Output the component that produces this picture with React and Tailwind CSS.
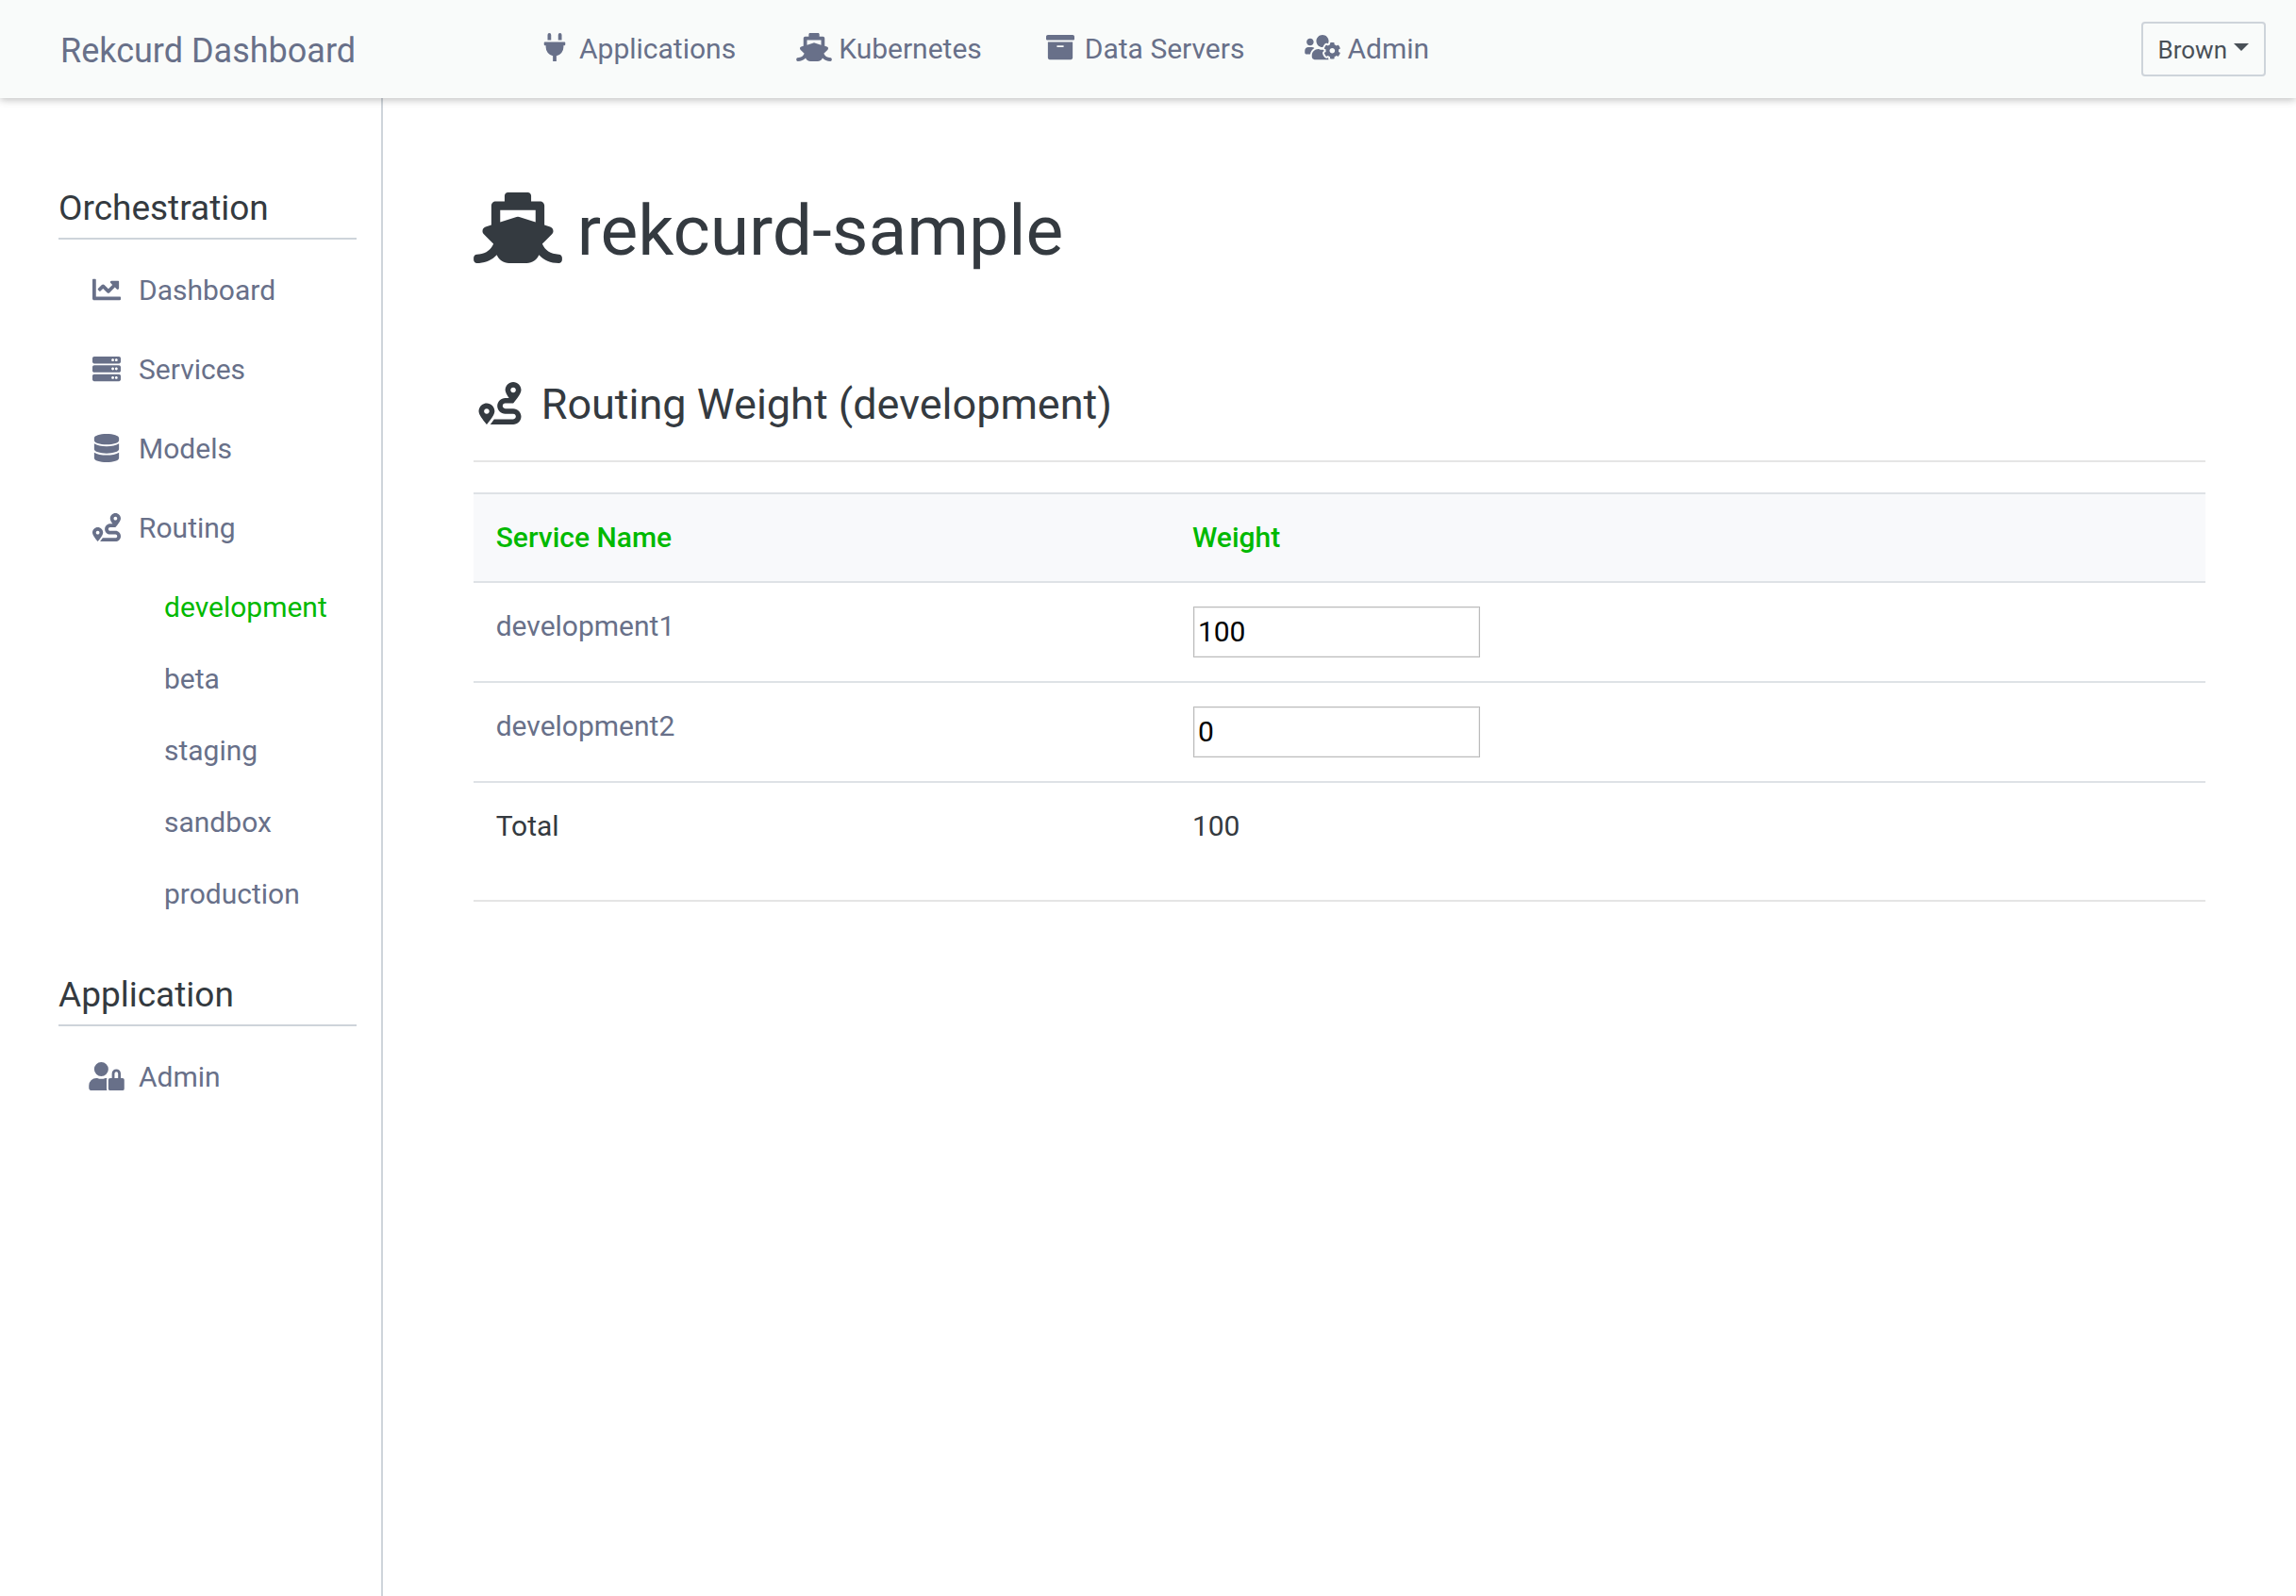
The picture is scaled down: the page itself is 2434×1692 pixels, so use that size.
import React, { useState } from "react";
import {
  FaPlug,
  FaShip,
  FaArchive,
  FaUsersCog,
  FaChartLine,
  FaServer,
  FaDatabase,
  FaRoute,
} from "react-icons/fa";

const navLinks = [
  { label: "Applications", Icon: FaPlug },
  { label: "Kubernetes", Icon: FaShip },
  { label: "Data Servers", Icon: FaArchive },
  { label: "Admin", Icon: FaUsersCog },
];

const orchestration = [
  { label: "Dashboard", Icon: FaChartLine },
  { label: "Services", Icon: FaServer },
  { label: "Models", Icon: FaDatabase },
  { label: "Routing", Icon: FaRoute },
];

const environments = ["development", "beta", "staging", "sandbox", "production"];

function UserLock({ className }) {
  return (
    <svg viewBox="0 0 640 512" fill="currentColor" className={className} aria-hidden="true">
      <path d="M224 256A128 128 0 1 0 96 128a128 128 0 0 0 128 128zm96 64a63.08 63.08 0 0 1 8.1-30.5c-4.8-.5-9.5-1.5-14.5-1.5h-16.7a174.08 174.08 0 0 1-145.8 0h-16.7A134.43 134.43 0 0 0 0 422.4V464a48 48 0 0 0 48 48h280.9a63.54 63.54 0 0 1-8.9-32zm288-32h-32v-80a80 80 0 0 0-160 0v80h-32a32 32 0 0 0-32 32v160a32 32 0 0 0 32 32h224a32 32 0 0 0 32-32V320a32 32 0 0 0-32-32zm-80 0h-64v-80a32 32 0 0 1 64 0z" />
    </svg>
  );
}

function Header() {
  return (
    <header className="relative z-10 flex h-[104px] items-center bg-[#f9fbfa] pr-8 pl-16 shadow-[0_2px_8px_rgba(0,0,0,0.25)]">
      <a href="#" className="w-[505px] pt-1 text-[36px] leading-[56px] text-[#687089]">
        Rekcurd Dashboard
      </a>
      <nav className="flex gap-16 pb-[2px]">
        {navLinks.map(({ label, Icon }) => (
          <a key={label} href="#" className="whitespace-nowrap text-[#687089]">
            <Icon className="mr-[7px] inline-block h-[30px] w-[38px] align-[-0.125em]" />
            {label}
          </a>
        ))}
      </nav>
      <button
        type="button"
        className="ml-auto flex h-[58px] items-center gap-[7px] rounded-[4px] border-2 border-[#ced4da] px-4 pt-[2px] text-[26px] text-[#495057]"
      >
        Brown
        <svg viewBox="0 0 16 8" className="mb-[6px] h-2 w-4" fill="currentColor">
          <path d="M0 0h16L8 8z" />
        </svg>
      </button>
    </header>
  );
}

function SectionTitle({ children }) {
  return (
    <h2 className="border-b-2 border-[#ced4da] pb-2 text-[37px] leading-[46px] text-[#343a40]">
      {children}
    </h2>
  );
}

function SideLink({ label, Icon }) {
  return (
    <a href="#" className="block text-[#687089]">
      <Icon className="mr-[15px] inline-block h-[30px] w-[38px] align-[-0.125em]" />
      {label}
    </a>
  );
}

function Sidebar() {
  return (
    <aside className="w-1/6 shrink-0 border-r-2 border-[#ced4da] pt-[94px] pr-[26px] pl-[62px]">
      <SectionTitle>Orchestration</SectionTitle>
      <ul className="mt-[31px] flex flex-col gap-[39px] pl-8">
        {orchestration.map((item) => (
          <li key={item.label}>
            <SideLink {...item} />
          </li>
        ))}
      </ul>
      <ul className="mt-[39px] mb-[62px] flex flex-col gap-[31px] pl-28">
        {environments.map((name, i) => (
          <li key={name}>
            <a href="#" className={i === 0 ? "text-[#00b900]" : "text-[#687089]"}>
              {name}
            </a>
          </li>
        ))}
      </ul>
      <SectionTitle>Application</SectionTitle>
      <div className="mt-[31px] pl-8">
        <SideLink label="Admin" Icon={UserLock} />
      </div>
    </aside>
  );
}

function RoutingTable() {
  const [rows, setRows] = useState([
    { name: "development1", weight: "100" },
    { name: "development2", weight: "0" },
  ]);
  const total = rows.reduce((sum, row) => sum + (Number(row.weight) || 0), 0);
  const update = (index, weight) =>
    setRows(rows.map((row, i) => (i === index ? { ...row, weight } : row)));

  return (
    <table className="mt-8 w-full table-fixed border-b-2 border-[#e5e5e5] text-left">
      <thead>
        <tr className="h-[94px] border-y-2 border-[#dee2e6] bg-[#f8f9fb] text-[#00b900]">
          <th className="w-[40.2%] px-6 pb-[2px] font-medium">Service Name</th>
          <th className="px-6 pb-[2px] font-medium">Weight</th>
        </tr>
      </thead>
      <tbody className="align-top">
        {rows.map((row, i) => (
          <tr key={row.name} className="border-b-2 border-[#dee2e6]">
            <td className="px-6 pt-[23px]">
              <a href="#" className="text-[#687089]">
                {row.name}
              </a>
            </td>
            <td className="px-[25px] py-[25px]">
              <input
                type="text"
                aria-label={`Weight of ${row.name}`}
                value={row.weight}
                onChange={(e) => update(i, e.target.value)}
                className="block h-[54px] w-[304px] border border-[#bbbbbb] bg-white px-1 pb-[2px] text-black shadow-[inset_0_0_0_1px_#eeeeee]"
              />
            </td>
          </tr>
        ))}
        <tr className="h-[126px] text-[#343a40]">
          <td className="px-6 pt-[23px]">Total</td>
          <td className="px-6 pt-[23px]">{total}</td>
        </tr>
      </tbody>
    </table>
  );
}

export default function App() {
  return (
    <div className="flex min-h-screen flex-col bg-white font-[Roboto,sans-serif] text-[30px] leading-[45px] text-[#343a40]">
      <Header />
      <div className="flex grow">
        <Sidebar />
        <main className="grow px-24 pt-[95px]">
          <h1 className="text-[75px] leading-[90px]">
            <FaShip className="mr-4 inline-block h-[75px] w-[94px] align-[-0.125em]" />
            rekcurd-sample
          </h1>
          <h2 className="mt-[113px] border-b-2 border-[#e5e5e5] pb-8 text-[45px] leading-[54px]">
            <FaRoute className="mr-4 inline-block h-[45px] w-[56px] align-[-0.125em]" />
            Routing Weight (development)
          </h2>
          <RoutingTable />
        </main>
      </div>
    </div>
  );
}
